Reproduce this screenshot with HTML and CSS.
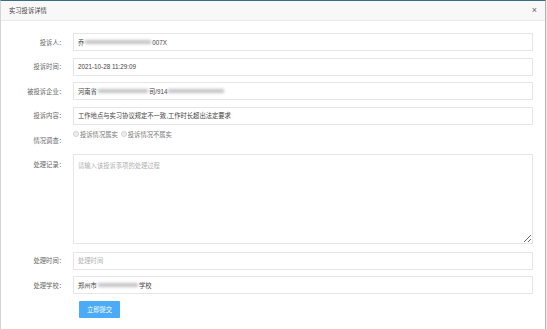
FILE: index.html
```html
<!DOCTYPE html>
<html lang="zh-CN">
<head>
    <meta charset="UTF-8">
    <meta name="viewport" content="width=device-width, initial-scale=1.0">
    <title>实习投诉详情</title>
    <link rel="stylesheet" href="styles.css">
</head>
<body>
    <div class="dialog">
        <!-- Header -->
        <div class="dialog-header">
            <span class="dialog-title">实习投诉详情</span>
            <span class="dialog-close">×</span>
        </div>

        <!-- Form -->
        <div class="dialog-body">
            <div class="form-row">
                <label class="form-label">投诉人：</label>
                <div class="form-field">乔<span class="blur" style="width:66px"></span>007X</div>
            </div>
            <div class="form-row">
                <label class="form-label">投诉时间：</label>
                <div class="form-field">2021-10-28 11:29:09</div>
            </div>
            <div class="form-row">
                <label class="form-label">被投诉企业：</label>
                <div class="form-field">河南省<span class="blur" style="width:50px"></span>司/914<span class="blur" style="width:56px"></span></div>
            </div>
            <div class="form-row">
                <label class="form-label">投诉内容：</label>
                <div class="form-field">工作地点与实习协议规定不一致,工作时长超出法定要求</div>
            </div>
            <div class="form-row radio-row">
                <label class="form-label">情况调查：</label>
                <div class="radio-group">
                    <span class="radio"><i class="radio-dot"></i>投诉情况属实</span>
                    <span class="radio"><i class="radio-dot"></i>投诉情况不属实</span>
                </div>
            </div>
            <div class="form-row area-row">
                <label class="form-label">处理记录：</label>
                <textarea class="form-area" placeholder="请输入该投诉事项的处理过程"></textarea>
            </div>
            <div class="form-row">
                <label class="form-label">处理时间：</label>
                <input class="form-input" type="text" placeholder="处理时间">
            </div>
            <div class="form-row">
                <label class="form-label">处理学校：</label>
                <div class="form-field">郑州市<span class="blur" style="width:40px"></span>学校</div>
            </div>
            <div class="form-actions">
                <button class="btn-submit">立即提交</button>
            </div>
        </div>
    </div>
</body>
</html>
```

FILE: styles.css
```css
body {
    margin: 0;
    padding: 0;
    background: #e9e9e9;
    font-family: 'Liberation Sans', 'Noto Sans CJK SC', sans-serif;
    font-size: 6.3px;
    color: #444;
    overflow: hidden;
}

.dialog {
    width: 544px;
    height: 328px;
    background: #fff;
    border-top: 1px solid #3b6c82;
    border-left: 1px solid #d4d4d4;
    border-right: 1px solid #b4b4b4;
}

/* Header */
.dialog-header {
    display: flex;
    align-items: center;
    justify-content: space-between;
    height: 19px;
    padding: 0 8px;
    background: #f8f8f8;
    border-bottom: 1px solid #e9e9e9;
}

.dialog-title {
    color: #444;
}

.dialog-close {
    font-size: 9px;
    color: #666;
    line-height: 1;
}

/* Body */
.dialog-body {
    padding-top: 12px;
}

.form-row {
    display: flex;
    align-items: center;
    margin-bottom: 6.5px;
}

.form-label {
    width: 64px;
    flex: none;
    text-align: right;
    color: #666;
    margin-right: 8px;
}

.form-field,
.form-input {
    box-sizing: border-box;
    width: 460px;
    height: 18px;
    padding: 0 4px;
    border: 1px solid #e6e6e6;
    display: flex;
    align-items: center;
    font: inherit;
    color: #444;
    background: #fff;
    outline: none;
}

.form-input::placeholder,
.form-area::placeholder {
    color: #b0b0b0;
}

.blur {
    display: inline-block;
    height: 4px;
    background: #c4c4c4;
    filter: blur(1.4px);
    margin: 0 1px;
}

/* Radio row */
.radio-row {
    align-items: flex-start;
    height: 24px;
    margin-top: -1.5px;
    margin-bottom: 0;
}

.radio-row .form-label {
    padding-top: 6.5px;
}

.radio-group {
    display: flex;
    gap: 3px;
    color: #777;
}

.radio {
    display: flex;
    align-items: center;
}

.radio-dot {
    display: inline-block;
    width: 4px;
    height: 4px;
    border: 1px solid #d2d2d2;
    border-radius: 50%;
    background: #eee;
    margin-right: 1px;
}

/* Textarea */
.area-row {
    align-items: flex-start;
    margin-bottom: 8px;
}

.area-row .form-label {
    padding-top: 6px;
}

.form-area {
    box-sizing: border-box;
    width: 460px;
    height: 90px;
    padding: 6px 4px;
    border: 1px solid #e6e6e6;
    font: inherit;
    color: #444;
    outline: none;
    margin: 0;
}

.form-actions {
    padding-left: 78px;
}

.btn-submit {
    width: 41px;
    height: 17px;
    padding: 0;
    border: none;
    border-radius: 1px;
    background: #4aabf6;
    color: #fff;
    font: inherit;
    cursor: pointer;
}
```
